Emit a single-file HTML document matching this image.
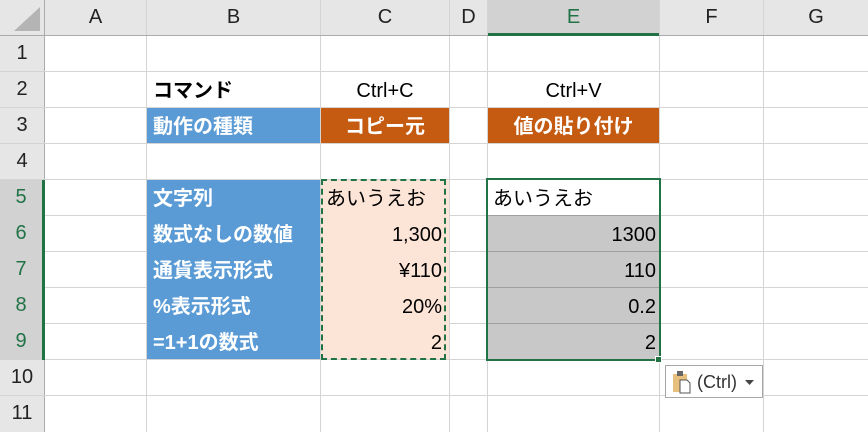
<!DOCTYPE html><html><head><meta charset="utf-8"><style>
body{margin:0;width:868px;height:432px;overflow:hidden;background:#fff;font-family:"Liberation Sans","Noto Sans CJK JP",sans-serif;position:relative}
div{position:absolute;box-sizing:border-box}
.vl{width:1px;background:#d4d4d4;top:0;height:432px}
.hl{height:1px;background:#d4d4d4;left:0;width:868px}
.t{font-size:20px;line-height:36px;height:36px;white-space:nowrap;color:#000;margin-top:2px}
.h{font-size:20px;line-height:35px;text-align:center;color:#222}
.w{color:#fff;font-weight:bold}
</style></head><body>
<div style="left:0;top:0;width:868px;height:35px;background:#e6e6e6"></div>
<div style="left:0;top:0;width:44px;height:432px;background:#e6e6e6"></div>
<div style="left:488px;top:0;width:171px;height:35px;background:#d2d2d2"></div>
<svg style="position:absolute;left:10px;top:5px" width="32" height="28"><polygon points="30,2 30,26 4,26" fill="#b4b4b4"/></svg>
<div class="vl" style="left:44px;background:#ababab"></div>
<div class="vl" style="left:146px"></div><div class="vl" style="left:320px"></div><div class="vl" style="left:449px"></div><div class="vl" style="left:487px"></div><div class="vl" style="left:659px"></div><div class="vl" style="left:763px"></div>
<div class="hl" style="top:35px;background:#ababab"></div>
<div class="hl" style="top:71px"></div><div class="hl" style="top:107px"></div><div class="hl" style="top:143px"></div><div class="hl" style="top:179px"></div><div class="hl" style="top:215px"></div><div class="hl" style="top:251px"></div><div class="hl" style="top:287px"></div><div class="hl" style="top:323px"></div><div class="hl" style="top:359px"></div><div class="hl" style="top:395px"></div>
<div style="left:147px;top:108px;width:173px;height:35px;background:#5b9bd5"></div>
<div style="left:321px;top:108px;width:128px;height:35px;background:#c55a11"></div>
<div style="left:488px;top:108px;width:171px;height:35px;background:#c55a11"></div>
<div style="left:147px;top:180px;width:173px;height:179px;background:#5b9bd5"></div>
<div style="left:321px;top:180px;width:128px;height:179px;background:#fce4d6"></div>
<div style="left:488px;top:216px;width:171px;height:143px;background:#c8c8c8"></div>
<div style="left:488px;top:251px;width:171px;height:1px;background:#a0a0a0"></div>
<div style="left:488px;top:287px;width:171px;height:1px;background:#a0a0a0"></div>
<div style="left:488px;top:323px;width:171px;height:1px;background:#a0a0a0"></div>
<div style="left:488px;top:215px;width:171px;height:1px;background:#a0a0a0"></div>
<div class="h" style="left:45px;top:0;width:101px">A</div>
<div class="h" style="left:147px;top:0;width:173px">B</div>
<div class="h" style="left:321px;top:0;width:128px">C</div>
<div class="h" style="left:450px;top:0;width:37px">D</div>
<div class="h" style="left:488px;top:0;width:171px;color:#217346">E</div>
<div style="left:488px;top:33px;width:171px;height:3px;background:#217346"></div>
<div class="h" style="left:660px;top:0;width:103px">F</div>
<div class="h" style="left:764px;top:0;width:104px">G</div>
<div class="h" style="left:0;top:36px;width:44px">1</div>
<div class="h" style="left:0;top:72px;width:44px">2</div>
<div class="h" style="left:0;top:108px;width:44px">3</div>
<div class="h" style="left:0;top:144px;width:44px">4</div>
<div style="left:0;top:180px;width:44px;height:180px;background:#d2d2d2"></div>
<div style="left:42px;top:180px;width:3px;height:180px;background:#217346"></div>
<div class="h" style="left:0;top:180px;width:42px;color:#217346">5</div>
<div class="h" style="left:0;top:216px;width:42px;color:#217346">6</div>
<div class="h" style="left:0;top:252px;width:42px;color:#217346">7</div>
<div class="h" style="left:0;top:288px;width:42px;color:#217346">8</div>
<div class="h" style="left:0;top:324px;width:42px;color:#217346">9</div>
<div class="h" style="left:0;top:360px;width:44px">10</div>
<div class="h" style="left:0;top:396px;width:44px">11</div>
<div class="t" style="left:153px;top:71px;font-weight:bold">コマンド</div>
<div class="t" style="left:321px;top:71px;width:128px;text-align:center">Ctrl+C</div>
<div class="t" style="left:488px;top:71px;width:171px;text-align:center">Ctrl+V</div>
<div class="t w" style="left:153px;top:107px">動作の種類</div>
<div class="t w" style="left:321px;top:107px;width:128px;text-align:center">コピー元</div>
<div class="t w" style="left:488px;top:107px;width:171px;text-align:center">値の貼り付け</div>
<div class="t w" style="left:153px;top:179px">文字列</div>
<div class="t w" style="left:153px;top:215px">数式なしの数値</div>
<div class="t w" style="left:153px;top:251px">通貨表示形式</div>
<div class="t w" style="left:153px;top:287px">%表示形式</div>
<div class="t w" style="left:153px;top:323px">=1+1の数式</div>
<div class="t" style="left:326px;top:179px">あいうえお</div>
<div class="t" style="left:321px;top:215px;width:121px;text-align:right">1,300</div>
<div class="t" style="left:321px;top:251px;width:121px;text-align:right">¥110</div>
<div class="t" style="left:321px;top:287px;width:121px;text-align:right">20%</div>
<div class="t" style="left:321px;top:323px;width:121px;text-align:right">2</div>
<div class="t" style="left:493px;top:179px">あいうえお</div>
<div class="t" style="left:488px;top:215px;width:168px;text-align:right">1300</div>
<div class="t" style="left:488px;top:251px;width:168px;text-align:right">110</div>
<div class="t" style="left:488px;top:287px;width:168px;text-align:right">0.2</div>
<div class="t" style="left:488px;top:323px;width:168px;text-align:right">2</div>
<div style="left:321px;top:179px;width:125px;height:181px;border:2px dashed #217346"></div>
<div style="left:486px;top:178px;width:175px;height:183px;border:2px solid #217346"></div>
<div style="left:655px;top:356px;width:7px;height:7px;background:#217346;border:1px solid #fff"></div>
<div style="left:665px;top:365px;width:98px;height:33px;border:1px solid #a8a8a8;background:#fff"></div>
<svg style="position:absolute;left:672px;top:370px" width="24" height="24"><rect x="1" y="4" width="14" height="18" fill="#e8c07d"/><rect x="5" y="1" width="6" height="5" fill="#666"/><path d="M8 10h7l3 3v10H8z" fill="#fff" stroke="#555"/></svg>
<div class="t" style="left:697px;top:362px;font-size:18px;color:#333">(Ctrl)</div>
<svg style="position:absolute;left:745px;top:380px" width="10" height="6"><polygon points="0,0 9,0 4.5,5" fill="#444"/></svg>
</body></html>
